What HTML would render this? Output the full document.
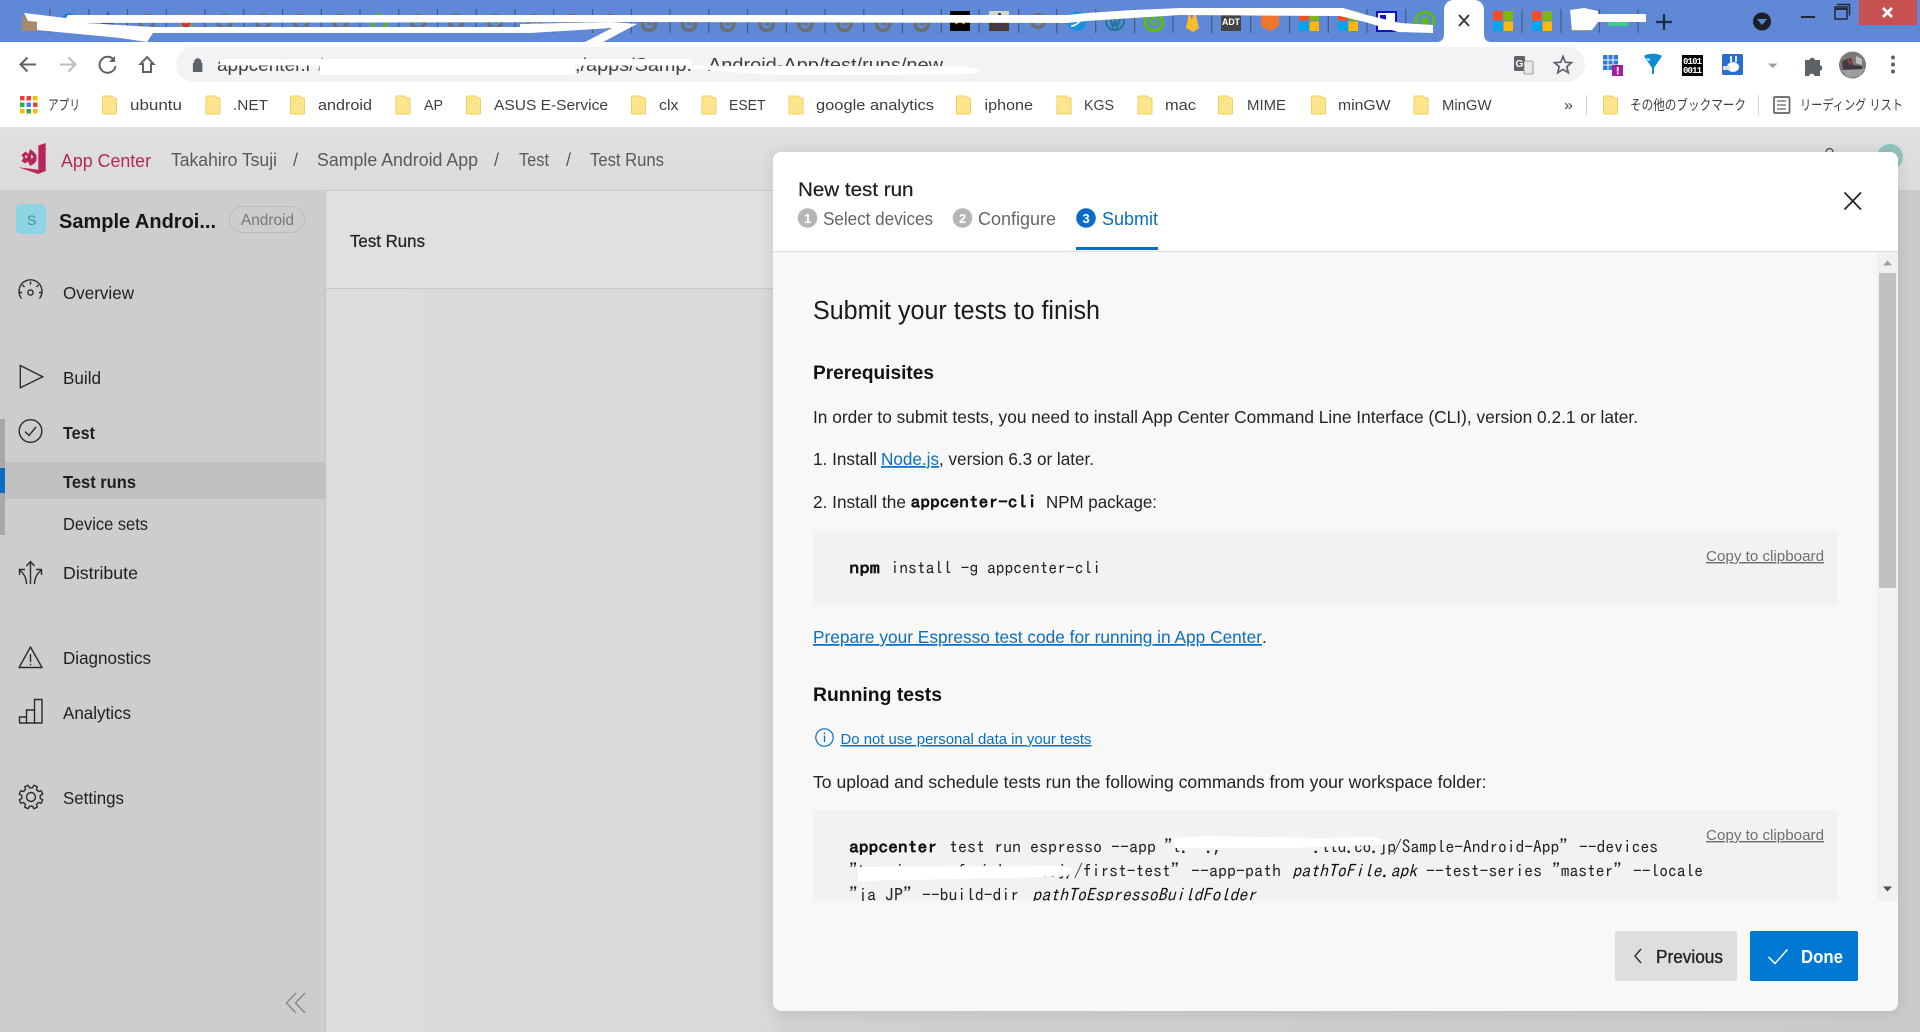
<!DOCTYPE html>
<html lang="en"><head><meta charset="utf-8"><title>App Center - New test run</title>
<style>
html,body{margin:0;padding:0;width:1920px;height:1032px;overflow:hidden;background:#dadada}
svg{position:absolute;left:0;top:0;display:block}
.box{position:absolute}
text{font-family:"Liberation Sans","Noto Sans CJK JP",sans-serif;font-size:17.5px;fill:#222;white-space:pre}
.bm{font-size:15px;fill:#3c4043}
.jp{font-size:14px;fill:#3c4043}
.nav{font-size:17.5px;fill:#1f1f1f}
.b{font-weight:bold}
.crumb{font-size:18px;fill:#5a5a5a}
.m{font-family:"IPAGothic","Liberation Mono",monospace;font-size:17.5px;fill:#222}
.mi{font-family:"IPAGothic","Liberation Mono",monospace;font-size:17.5px;font-style:italic;fill:#111}
.mb{font-family:"IPAGothic","Liberation Mono",monospace;font-size:17.5px;font-weight:bold;fill:#111}
.lnk{fill:#0a6fc2;text-decoration:underline}
.cp{font-size:14.5px;fill:#6f6f6f;text-decoration:underline}
.ic{fill:none;stroke:#2b2b2b;stroke-width:1.4}
</style></head>
<body>
<div class="box" style="left:0;top:0;width:1920px;height:42px;background:#5f88d6"></div>
<div class="box" style="left:0;top:42px;width:1920px;height:85px;background:#fff"></div>
<div class="box" style="left:176px;top:47px;width:1409px;height:35px;border-radius:18px;background:#f1f3f4"></div>
<div class="box" style="left:0;top:127px;width:1920px;height:63px;background:linear-gradient(#e0e0e0,#dbdbdb)"></div>
<div class="box" style="left:0;top:190px;width:1920px;height:1px;background:#c9c9c9"></div>
<div class="box" style="left:326px;top:191px;width:1594px;height:841px;background:linear-gradient(90deg,#dcdcdc 0,#d9d9d9 440px,#d0d0d0 460px,#cacaca 100%)"></div>
<div class="box" style="left:326px;top:191px;width:447px;height:97px;background:#e0e0e0;border-bottom:1px solid #c7c7c7"></div>
<div class="box" style="left:0;top:191px;width:326px;height:841px;background:#cdcdcd;border-right:1px solid #c4c4c4;box-sizing:border-box"></div>
<div class="box" style="left:0;top:419px;width:5px;height:116px;background:#a8a8a8"></div>
<div class="box" style="left:5px;top:462px;width:320px;height:37px;background:#c1c1c1"></div>
<div class="box" style="left:0;top:468px;width:5px;height:25px;background:#0a6cc4"></div>
<div class="box" style="left:1877px;top:144px;width:26px;height:26px;border-radius:50%;background:#92c4bc"></div>
<div class="box" style="left:773px;top:152px;width:1125px;height:859px;border-radius:8px;background:#f8f8f8;box-shadow:0 0 14px rgba(0,0,0,.1);overflow:hidden">
  <div class="box" style="left:0;top:0;width:1125px;height:99px;background:#fff;border-bottom:1.5px solid #dcdcdc"></div>
  <div class="box" style="left:1104px;top:100px;width:21px;height:649px;background:#f1f1f1"></div>
  <div class="box" style="left:1106px;top:121px;width:17px;height:315px;background:#c1c1c1"></div>
</div>
<div class="box" style="left:813px;top:531px;width:1024px;height:74px;background:#f2f2f2"></div>
<div class="box" style="left:813px;top:810px;width:1024px;height:91px;background:#f2f2f2"></div>
<div class="box" style="left:1076px;top:247px;width:82px;height:3px;background:#0a6cc4"></div>
<div class="box" style="left:1615px;top:931px;width:122px;height:50px;border-radius:2px;background:#dedede"></div>
<div class="box" style="left:1750px;top:931px;width:108px;height:50px;border-radius:2px;background:#0078d4"></div>

<svg width="1920" height="1032" viewBox="0 0 1920 1032" xmlns="http://www.w3.org/2000/svg">
<defs>
<symbol id="sw" overflow="visible"><circle cx="0" cy="0" r="6.5" fill="none" stroke="#6e6e6e" stroke-width="3.4"/><path d="M-2 0h5" stroke="#6e6e6e" stroke-width="2"/></symbol>
<symbol id="ms" overflow="visible"><rect x="-10" y="-10" width="9.5" height="9.5" fill="#f25022"/><rect x=".5" y="-10" width="9.5" height="9.5" fill="#7fba00"/><rect x="-10" y=".5" width="9.5" height="9.5" fill="#00a4ef"/><rect x=".5" y=".5" width="9.5" height="9.5" fill="#ffb900"/></symbol>
<symbol id="fd" overflow="visible"><path d="M1 0h8l2 2h2a1 1 0 0 1 1 1v14a1 1 0 0 1-1 1H1a1 1 0 0 1-1-1V1a1 1 0 0 1 1-1z" fill="#fde58e" stroke="#f1cf62" stroke-width="1"/></symbol>
<clipPath id="c2"><rect x="813" y="810" width="1024" height="91"/></clipPath>
</defs>

<!-- tab separators -->
<g stroke="#46597f" stroke-width="1.2">
<path d="M50 9v24M88.800 9v24M127.500 9v24M166.300 9v24M205 9v24M243.800 9v24M282.500 9v24M321.300 9v24M360 9v24M398.800 9v24M437.500 9v24M476.300 9v24M515 9v24M553.800 9v24M592.500 9v24M631.300 9v24M670 9v24M708.800 9v24M747.500 9v24M786.300 9v24M825 9v24M863.800 9v24M902.500 9v24M941.300 9v24M979 9v24M1018.700 9v24M1056.700 9v24M1095.700 9v24M1134.700 9v24M1173 9v24M1211.700 9v24M1250.700 9v24M1289.500 9v24M1328.300 9v24M1367 9v24M1405.800 9v24M1522 9v24M1561 9v24M1599.500 9v24M1638 9v24"/>
</g>
<!-- tab favicons -->
<rect x="22" y="17" width="16" height="14" fill="#a58a6c"/>
<circle cx="69" cy="21" r="8" fill="#1c7fd0"/>
<path d="M108 11l8 18h-16z" fill="#2d4fd0"/>
<use href="#sw" x="147" y="22"/><path d="M178 14h16v16h-16z" fill="#8a8a8a"/><path d="M180 15l6 14 6-14" fill="none" stroke="#d03030" stroke-width="3"/>
<use href="#sw" x="224.700" y="22"/><use href="#sw" x="263" y="22"/><use href="#sw" x="301" y="22"/><use href="#sw" x="340.500" y="22"/>
<circle cx="379" cy="22" r="7" fill="none" stroke="#5dbb12" stroke-width="3"/>
<use href="#sw" x="418" y="22"/><use href="#sw" x="456" y="22"/><use href="#sw" x="495" y="22"/><use href="#sw" x="534" y="22"/><use href="#sw" x="572.600" y="22"/><use href="#sw" x="610.500" y="22"/><use href="#sw" x="649" y="24"/><use href="#sw" x="689" y="24"/><use href="#sw" x="727.500" y="24"/><use href="#sw" x="766.700" y="24"/><use href="#sw" x="805.300" y="24"/><use href="#sw" x="844.500" y="24"/><use href="#sw" x="883" y="24"/><use href="#sw" x="921.600" y="24"/>
<rect x="950" y="11" width="20" height="20" rx="1" fill="#000"/><path d="M956 24l4-7 4 7" fill="none" stroke="#f0b400" stroke-width="2"/>
<rect x="989" y="11" width="20" height="20" fill="#d8d4c8"/><rect x="989" y="21" width="20" height="10" fill="#4a3a34"/><rect x="998" y="13" width="3" height="16" fill="#3d3a77"/>
<use href="#sw" x="1038" y="21"/>
<circle cx="1077" cy="21" r="10" fill="#1c8fdc"/><path d="M1071 26c4 0 10-4 12-10" stroke="#fff" stroke-width="1.6" fill="none"/>
<circle cx="1115" cy="21" r="9" fill="none" stroke="#21759b" stroke-width="2"/><path d="M1109 16l4 11 2-6 2 6 4-11" fill="none" stroke="#21759b" stroke-width="2.2"/>
<circle cx="1154" cy="22" r="8.500" fill="none" stroke="#5dbb12" stroke-width="3.4"/><circle cx="1154" cy="21" r="3.400" fill="none" stroke="#5dbb12" stroke-width="2"/>
<path d="M1186 28l3-15 3 6 3-8 4 17-6 4z" fill="#fbbc2c"/>
<rect x="1221" y="15" width="20" height="16" fill="#444"/><text x="1222" y="25" style="font-size:9.500px;fill:#fff;font-weight:bold" textLength="18" lengthAdjust="spacingAndGlyphs">ADT</text>
<path d="M1261 15l9-4 9 4v11l-9 5-9-5z" fill="#f0762a"/>
<use href="#ms" x="1309" y="21"/><use href="#ms" x="1348" y="21"/>
<rect x="1377" y="12" width="19" height="19" fill="#fff" stroke="#1010d0" stroke-width="2"/><path d="M1380 15h6v5h-6zM1388 24h5v5h-5z" fill="#1010d0"/>
<circle cx="1425" cy="21" r="9" fill="none" stroke="#5dbb12" stroke-width="3"/><circle cx="1425" cy="21" r="4" fill="#5dbb12"/>
<use href="#ms" x="1503" y="21"/><use href="#ms" x="1542" y="21"/>
<rect x="1571" y="13" width="19" height="18" fill="#999"/>
<rect x="1608" y="20" width="20" height="6" fill="#3ecf8e"/>

<!-- scribbles -->
<g fill="#fff">
<path d="M24 13L66 18L68 15L1067 15L1087 13L1133 10L1180 8L1343 8L1367 15L1400 23L1433 25L1433 33L1398 32L1365 22L1340 16L1180 15L1133 18L1087 21L1067 23L640 22L68 23L40 22L28 21Z"/>
<path d="M37 22L68 22L153 27L520 27L520 24L612 22L637 24L603 42L585 42L612 28L530 33L153 33L147 42L120 38L37 30Z"/>
<path d="M1570 10L1584 8L1598 11L1598 14L1646 14L1646 22L1598 22L1592 30L1572 30Z"/>
</g>

<!-- active tab -->
<path d="M1436 42c6 0 8-3 8-8V10c0-6 4-10 10-10h20c6 0 10 4 10 10v24c0 5 2 8 8 8z" fill="#fff"/>
<path d="M1459 15l10 11m0-11l-10 11" stroke="#333" stroke-width="1.800" fill="none"/>
<!-- new tab & window controls -->
<path d="M1664 14v16m-8-8h16" stroke="#222b3d" stroke-width="2.200"/>
<circle cx="1762" cy="21.500" r="9" fill="#1b2028"/><path d="M1757 19h10l-5 6z" fill="#5f88d6"/>
<path d="M1801 17h14" stroke="#20283a" stroke-width="2"/>
<rect x="1835" y="7" width="12" height="12" fill="none" stroke="#20283a" stroke-width="1.500"/><path d="M1837 4.500h12.500v11" fill="none" stroke="#20283a" stroke-width="1.500"/><path d="M1835 9h12" stroke="#20283a" stroke-width="2"/>
<rect x="1859" y="0" width="58" height="25" fill="#c75050"/>
<path d="M1883 8l9 9m0-9l-9 9" stroke="#fff" stroke-width="2.800"/>

<!-- toolbar -->
<g fill="none" stroke="#5f6368" stroke-width="2">
<path d="M36 64.500H21m6.500-7l-7 7 7 7"/>
<path d="M60 64.500h15m-6.500-7l7 7-7 7" stroke="#b9bcc0"/>
<path d="M114 60a8 8 0 1 0 1.500 6"/><path d="M115 56v6h-6" fill="#5f6368" stroke="none"/>
<path d="M147 57l-6.500 7h2.500v8h8v-8h2.500z"/>
</g>
<path d="M194 63v-1a3.700 3.700 0 0 1 7.400 0v1h1v9h-9.500v-9z" fill="#5f6368"/>
<text x="217" y="71" style="font-size:18px;fill:#3c4043" textLength="95" lengthAdjust="spacingAndGlyphs">appcenter.r</text>
<text x="318" y="71" style="font-size:18px;fill:#9a9a9a">/ ,   ,</text>
<text x="575" y="71" style="font-size:18px;fill:#3c4043" textLength="117" lengthAdjust="spacingAndGlyphs">,/apps/Samp.</text>
<text x="708" y="71" style="font-size:18px;fill:#3c4043" textLength="235" lengthAdjust="spacingAndGlyphs">Android-App/test/runs/new</text>
<g fill="#fff">
<path d="M220 59h472v6.500H220z"/>
<path d="M320 65h255v10H320z"/>
<path d="M686 65l40 1 60 0 150 0 30 .500 13 3v3l-12 1.500-70 1-120 0-60-4-30-3z"/>
</g>
<rect x="1514" y="56" width="11" height="15" rx="1.500" fill="#5f6368"/><text x="1515.500" y="67" style="font-size:10px;fill:#fff;font-weight:bold">G</text><rect x="1524" y="61" width="9" height="13" rx="1" fill="#e8e8e8" stroke="#888" stroke-width=".8"/>
<path d="M1563 56.500l2.300 5.700 6.200.500-4.700 4 1.500 6-5.300-3.300-5.300 3.300 1.500-6-4.700-4 6.200-.500z" fill="none" stroke="#5f6368" stroke-width="1.700"/>
<g>
<rect x="1603" y="55" width="15" height="15" fill="#2e7be0"/><path d="M1603 60h15M1603 65h15M1608 55v15M1613 55v15" stroke="#fff" stroke-width="1"/><rect x="1612" y="65" width="11" height="11" fill="#a0209c"/><rect x="1616.800" y="67" width="1.800" height="4.500" fill="#fff"/><rect x="1616.800" y="72.500" width="1.800" height="1.800" fill="#fff"/>
<path d="M1644 56c4-3 14-3 18 0l-8 12v6h-2v-6z" fill="#0f8bd6"/><path d="M1650 60l-3-1" stroke="#bfe9ff" stroke-width="2"/>
<rect x="1682" y="55" width="21" height="21" fill="#000"/>
<text x="1683" y="64" style="font-family:'Liberation Mono',monospace;font-size:9px;fill:#fff;font-weight:bold" textLength="19">0101</text>
<text x="1683" y="73" style="font-family:'Liberation Mono',monospace;font-size:9px;fill:#fff;font-weight:bold" textLength="19">0011</text>
<rect x="1722" y="54" width="21" height="21" rx="1.500" fill="#2a6fcf"/><ellipse cx="1733" cy="67" rx="6" ry="5" fill="#fff"/><path d="M1731 56v6M1736 56v6" stroke="#fff" stroke-width="1.700"/><rect x="1723" y="66" width="7" height="4" fill="#ddd"/>
</g>
<path d="M1768 63.500h9.500l-4.700 4.500z" fill="#9a9da1"/>
<path d="M1805 60h4.500a2.800 2.800 0 0 1 5.500 0h5v5.200a2.800 2.800 0 0 1 0 5.500V76h-5.500a2.800 2.800 0 0 0-5.500 0H1805z" fill="#5f6368"/>
<circle cx="1852.500" cy="65" r="13.500" fill="#7e7877"/><path d="M1842 61l9-3 2 7 9 1v8l-13 3-6-6z" fill="#3f3a44"/><path d="M1847 58l5 4-3 4z" fill="#a33b3b"/><path d="M1856 56l6 3v6l-6-2z" fill="#bfc0bd"/><path d="M1841 70l24-1-5 7-12 2z" fill="#9a9fa3"/>
<g fill="#5f6368"><circle cx="1893" cy="57.500" r="2"/><circle cx="1893" cy="64.500" r="2"/><circle cx="1893" cy="71.500" r="2"/></g>

<!-- bookmarks -->
<g>
<rect x="20" y="96" width="4.500" height="4.500" fill="#ea4335"/><rect x="26.500" y="96" width="4.500" height="4.500" fill="#ea4335"/><rect x="33" y="96" width="4.500" height="4.500" fill="#fbbc04"/>
<rect x="20" y="102.500" width="4.500" height="4.500" fill="#34a853"/><rect x="26.500" y="102.500" width="4.500" height="4.500" fill="#4285f4"/><rect x="33" y="102.500" width="4.500" height="4.500" fill="#ea4335"/>
<rect x="20" y="109" width="4.500" height="4.500" fill="#fbbc04"/><rect x="26.500" y="109" width="4.500" height="4.500" fill="#34a853"/><rect x="33" y="109" width="4.500" height="4.500" fill="#fbbc04"/>
<text class="jp" x="48" y="110" textLength="32" lengthAdjust="spacingAndGlyphs">アプリ</text>
<use href="#fd" x="102.500" y="96"/><text class="bm" x="130" y="110" textLength="52" lengthAdjust="spacingAndGlyphs">ubuntu</text>
<use href="#fd" x="206" y="96"/><text class="bm" x="233" y="110" textLength="35" lengthAdjust="spacingAndGlyphs">.NET</text>
<use href="#fd" x="290.500" y="96"/><text class="bm" x="318" y="110" textLength="54" lengthAdjust="spacingAndGlyphs">android</text>
<use href="#fd" x="396" y="96"/><text class="bm" x="424" y="110" textLength="19" lengthAdjust="spacingAndGlyphs">AP</text>
<use href="#fd" x="466.500" y="96"/><text class="bm" x="494" y="110" textLength="114" lengthAdjust="spacingAndGlyphs">ASUS E-Service</text>
<use href="#fd" x="631.500" y="96"/><text class="bm" x="659" y="110" textLength="19.500" lengthAdjust="spacingAndGlyphs">clx</text>
<use href="#fd" x="702" y="96"/><text class="bm" x="729" y="110" textLength="36.500" lengthAdjust="spacingAndGlyphs">ESET</text>
<use href="#fd" x="789" y="96"/><text class="bm" x="816" y="110" textLength="118" lengthAdjust="spacingAndGlyphs">google analytics</text>
<use href="#fd" x="956.500" y="96"/><text class="bm" x="984.500" y="110" textLength="48.500" lengthAdjust="spacingAndGlyphs">iphone</text>
<use href="#fd" x="1057" y="96"/><text class="bm" x="1084" y="110" textLength="30" lengthAdjust="spacingAndGlyphs">KGS</text>
<use href="#fd" x="1138" y="96"/><text class="bm" x="1165" y="110" textLength="31" lengthAdjust="spacingAndGlyphs">mac</text>
<use href="#fd" x="1218.500" y="96"/><text class="bm" x="1247" y="110" textLength="39" lengthAdjust="spacingAndGlyphs">MIME</text>
<use href="#fd" x="1311.500" y="96"/><text class="bm" x="1338" y="110" textLength="52.500" lengthAdjust="spacingAndGlyphs">minGW</text>
<use href="#fd" x="1414" y="96"/><text class="bm" x="1442" y="110" textLength="49.500" lengthAdjust="spacingAndGlyphs">MinGW</text>
<text class="bm" x="1564" y="110" textLength="9" lengthAdjust="spacingAndGlyphs">»</text>
<path d="M1586.500 95v20M1758.500 95v20" stroke="#d0d2d5" stroke-width="1"/>
<use href="#fd" x="1603.500" y="96"/><text class="jp" x="1630" y="110" textLength="116" lengthAdjust="spacingAndGlyphs">その他のブックマーク</text>
<rect x="1774" y="97" width="15.500" height="16" rx="1" fill="none" stroke="#5f6368" stroke-width="1.700"/><path d="M1777 101h9M1777 105h9M1777 109h9" stroke="#5f6368" stroke-width="1.300" fill="none"/>
<text class="jp" x="1800" y="110" textLength="103" lengthAdjust="spacingAndGlyphs">リーディング リスト</text>
</g>

<!-- app header -->
<path d="M38.300 145.500l7.400-2.500v28l-7.400 3-20-6.700 20 2.500z" fill="#b8255c"/>
<path d="M21.500 155l4-3.500 3 2.500 1.500-5 4.500 3.500 2 3v5l-2 3-4.500 2.500-2-4.500-3 2-3.500-2.500 2-3z" fill="#b8255c"/>
<path d="M25 155l3 1.500-2.500 2zM31 154.500l2.500 2-2 3z" fill="#e0e0e0"/>
<text x="61" y="167" style="font-size:18px;fill:#b32a58" textLength="90" lengthAdjust="spacingAndGlyphs">App Center</text>
<text class="crumb" x="171" y="166" textLength="106" lengthAdjust="spacingAndGlyphs">Takahiro Tsuji</text>
<text class="crumb" x="293" y="166">/</text>
<text class="crumb" x="317" y="166" textLength="161" lengthAdjust="spacingAndGlyphs">Sample Android App</text>
<text class="crumb" x="494" y="166">/</text>
<text class="crumb" x="519" y="166" textLength="30" lengthAdjust="spacingAndGlyphs">Test</text>
<text class="crumb" x="566" y="166">/</text>
<text class="crumb" x="590" y="166" textLength="74" lengthAdjust="spacingAndGlyphs">Test Runs</text>
<path d="M1826 152a3.500 3.500 0 0 1 7 0" fill="none" stroke="#444" stroke-width="1.200"/>

<!-- sidebar -->
<rect x="16" y="204" width="30" height="30" rx="5" fill="#8fd4e4"/>
<text x="27" y="225" style="font-size:14px;fill:#4a8c9c">S</text>
<text class="b" x="59" y="228" style="font-size:20px;fill:#161616" textLength="157" lengthAdjust="spacingAndGlyphs">Sample Androi...</text>
<rect x="229.500" y="206.500" width="75" height="26" rx="13" fill="none" stroke="#bcbcbc"/>
<text x="241" y="225" style="font-size:15.500px;fill:#777" textLength="53" lengthAdjust="spacingAndGlyphs">Android</text>
<text class="b" x="350" y="247" style="font-size:17.500px;font-weight:normal;stroke:#222;stroke-width:.25px" textLength="75" lengthAdjust="spacingAndGlyphs">Test Runs</text>

<text class="nav" x="63" y="299" textLength="71" lengthAdjust="spacingAndGlyphs">Overview</text>
<text class="nav" x="63" y="384" textLength="38" lengthAdjust="spacingAndGlyphs">Build</text>
<text class="nav b" x="63" y="439" textLength="32" lengthAdjust="spacingAndGlyphs">Test</text>
<text class="nav b" x="63" y="488" textLength="73" lengthAdjust="spacingAndGlyphs">Test runs</text>
<text class="nav" x="63" y="530" textLength="85" lengthAdjust="spacingAndGlyphs">Device sets</text>
<text class="nav" x="63" y="579" textLength="75" lengthAdjust="spacingAndGlyphs">Distribute</text>
<text class="nav" x="63" y="664" textLength="88" lengthAdjust="spacingAndGlyphs">Diagnostics</text>
<text class="nav" x="63" y="719" textLength="68" lengthAdjust="spacingAndGlyphs">Analytics</text>
<text class="nav" x="63" y="804" textLength="61" lengthAdjust="spacingAndGlyphs">Settings</text>

<g class="ic">
<!-- overview gauge -->
<path d="M21.500 298.500a11.500 11.500 0 1 1 18 0"/><circle cx="30.500" cy="292.500" r="2.600"/><path d="M30.500 281.500v3M22.500 285l2 2M38.500 285l-2 2M19 292.500h3M42 292.500h-3"/>
<!-- build -->
<path d="M20.300 365.500l22.400 11.300-22.400 11z"/>
<!-- test -->
<circle cx="30.500" cy="431" r="11.300"/><path d="M25 431.500l4 4 7-8.500"/>
<!-- distribute -->
<path d="M30.500 561.500V584M26.500 566l4-4.500 4 4.500"/><path d="M26.500 584c0-5-2-10-7-14M19.500 575v-5.500H25"/><path d="M34.500 584c0-5 2-10 7-14M41.500 575v-5.500H36"/>
<!-- diagnostics -->
<path d="M30.500 647l11.500 20.500H19z" stroke-linejoin="round"/><path d="M30.500 654v8M30.500 663.800v1.600"/>
<!-- analytics -->
<path d="M19.500 722.500v-5.500h7M26.500 722.500V710h8M34.500 722.500V699.500H42v23M19 723h23.500"/>
<!-- settings -->
<path transform="translate(31 797)" stroke-linejoin="round" d="M9.170 1.530L11.670 2.800L10.230 6.270L7.570 5.400L5.400 7.570L6.270 10.230L2.800 11.670L1.530 9.170L-1.530 9.170L-2.800 11.670L-6.270 10.230L-5.400 7.570L-7.570 5.400L-10.230 6.270L-11.670 2.800L-9.170 1.530L-9.170 -1.530L-11.670 -2.800L-10.230 -6.270L-7.570 -5.400L-5.400 -7.570L-6.270 -10.230L-2.800 -11.670L-1.530 -9.170L1.530 -9.170L2.800 -11.670L6.270 -10.230L5.400 -7.570L7.570 -5.400L10.230 -6.270L11.670 -2.800L9.170 -1.530Z"/>
<circle cx="31" cy="797" r="4.500"/>
</g>
<path d="M296 993l-9.500 10 9.500 10M305 993l-9.500 10 9.500 10" fill="none" stroke="#8a8a8a" stroke-width="1.500"/>

<!-- modal header -->
<text x="798" y="196" style="font-size:19px;fill:#1c1c1c;stroke:#1c1c1c;stroke-width:.2px" textLength="115.500" lengthAdjust="spacingAndGlyphs">New test run</text>
<circle cx="807.500" cy="218" r="9.800" fill="#b5b5b5"/><text x="804" y="223" style="font-size:13px;fill:#fff;font-weight:bold">1</text>
<text x="823" y="225" style="font-size:18px;fill:#666" textLength="110" lengthAdjust="spacingAndGlyphs">Select devices</text>
<circle cx="962.500" cy="218" r="9.800" fill="#b5b5b5"/><text x="959" y="223" style="font-size:13px;fill:#fff;font-weight:bold">2</text>
<text x="978" y="225" style="font-size:18px;fill:#666" textLength="78" lengthAdjust="spacingAndGlyphs">Configure</text>
<circle cx="1086" cy="218" r="9.800" fill="#0a6cc4"/><text x="1082.500" y="223" style="font-size:13px;fill:#fff;font-weight:bold">3</text>
<text x="1102" y="225" style="font-size:18px;fill:#0a6cc4" textLength="56" lengthAdjust="spacingAndGlyphs">Submit</text>
<path d="M1844.500 192.500l16.500 17m0-17l-16.500 17" fill="none" stroke="#222" stroke-width="1.700"/>

<!-- modal body -->
<text x="813" y="319" style="font-size:25.500px;fill:#1a1a1a" textLength="287" lengthAdjust="spacingAndGlyphs">Submit your tests to finish</text>
<text class="b" x="813" y="379" style="font-size:19.500px;fill:#111" textLength="121" lengthAdjust="spacingAndGlyphs">Prerequisites</text>
<text x="813" y="423" textLength="825" lengthAdjust="spacingAndGlyphs">In order to submit tests, you need to install App Center Command Line Interface (CLI), version 0.2.1 or later.</text>
<text x="813" y="465" textLength="64" lengthAdjust="spacingAndGlyphs">1. Install</text>
<text class="lnk" x="881" y="465" textLength="58" lengthAdjust="spacingAndGlyphs">Node.js</text>
<text x="939" y="465" textLength="155" lengthAdjust="spacingAndGlyphs">, version 6.3 or later.</text>
<text x="813" y="508" textLength="93" lengthAdjust="spacingAndGlyphs">2. Install the</text>
<text class="mb" x="910.500" y="508" textLength="126.500" lengthAdjust="spacingAndGlyphs">appcenter-cli</text>
<text x="1046" y="508" textLength="111" lengthAdjust="spacingAndGlyphs">NPM package:</text>

<text class="mb" x="849" y="574" textLength="31" lengthAdjust="spacingAndGlyphs">npm</text>
<text class="m" x="890.500" y="574" textLength="210.500" lengthAdjust="spacingAndGlyphs">install -g appcenter-cli</text>
<text class="cp" x="1706" y="561" textLength="118" lengthAdjust="spacingAndGlyphs">Copy to clipboard</text>

<text class="lnk" x="813" y="643" textLength="449" lengthAdjust="spacingAndGlyphs">Prepare your Espresso test code for running in App Center</text>
<text x="1262" y="643">.</text>
<text class="b" x="813" y="701" style="font-size:19.500px;fill:#111" textLength="129" lengthAdjust="spacingAndGlyphs">Running tests</text>
<circle cx="824.500" cy="737.500" r="8.700" fill="none" stroke="#0a6fc2" stroke-width="1.200"/>
<path d="M824.500 735.500v6.500M824.500 732.500v1.800" stroke="#0a6fc2" stroke-width="1.300"/>
<text class="lnk" x="840.500" y="744" style="font-size:15px" textLength="251" lengthAdjust="spacingAndGlyphs">Do not use personal data in your tests</text>
<text x="813" y="788" textLength="673.500" lengthAdjust="spacingAndGlyphs">To upload and schedule tests run the following commands from your workspace folder:</text>

<g clip-path="url(#c2)">
<text class="mb" x="849" y="853" textLength="88" lengthAdjust="spacingAndGlyphs">appcenter</text>
<text class="m" x="949" y="853" textLength="207" lengthAdjust="spacingAndGlyphs">test run espresso --app</text>
<text class="m" x="1164" y="853" textLength="232" lengthAdjust="spacing">"t.  .,        ~  .ltd.co.jp</text>
<text class="m" x="1393" y="853" textLength="175" lengthAdjust="spacingAndGlyphs">/Sample-Android-App"</text>
<text class="m" x="1579" y="853" textLength="79" lengthAdjust="spacingAndGlyphs">--devices</text>
<text class="m" x="849" y="877" textLength="225" lengthAdjust="spacing">"t  ..i.,  .  f  i.l.......j,</text>
<text class="m" x="1074" y="877" textLength="105.500" lengthAdjust="spacingAndGlyphs">/first-test"</text>
<text class="m" x="1191" y="877" textLength="90" lengthAdjust="spacingAndGlyphs">--app-path</text>
<text class="mi" x="1292" y="877" textLength="125" lengthAdjust="spacingAndGlyphs">pathToFile.apk</text>
<text class="m" x="1426" y="877" textLength="116" lengthAdjust="spacingAndGlyphs">--test-series</text>
<text class="m" x="1552" y="877" textLength="70" lengthAdjust="spacingAndGlyphs">"master"</text>
<text class="m" x="1633" y="877" textLength="70" lengthAdjust="spacingAndGlyphs">--locale</text>
<text class="m" x="849" y="901" textLength="63" lengthAdjust="spacingAndGlyphs">"ja_JP"</text>
<text class="m" x="922" y="901" textLength="97" lengthAdjust="spacingAndGlyphs">--build-dir</text>
<text class="mi" x="1032" y="901" textLength="224" lengthAdjust="spacingAndGlyphs">pathToEspressoBuildFolder</text>
</g>
<g fill="#fff">
<path d="M1174 838l30-2 120 2 50-1 14 4 4 3-40 2-60 2-118 0z"/>
<path d="M858 867l200-1 14 2-4 8-60 2-150 3z"/>
</g>
<text class="cp" x="1706" y="840" textLength="118" lengthAdjust="spacingAndGlyphs">Copy to clipboard</text>

<!-- scrollbar arrows -->
<path d="M1883 265.500h9l-4.500-5z" fill="#a0a0a0"/>
<path d="M1883 886.500h9l-4.500 5z" fill="#505050"/>

<!-- footer -->
<path d="M1641 949l-6 7 6 7" fill="none" stroke="#333" stroke-width="1.500"/>
<text class="b" x="1656" y="963" style="font-size:18px;font-weight:normal;fill:#222;stroke:#222;stroke-width:.35px" textLength="67" lengthAdjust="spacingAndGlyphs">Previous</text>
<path d="M1768.500 957l6.500 6.500 12.500-14" fill="none" stroke="#fff" stroke-width="1.500"/>
<text class="b" x="1801" y="963" style="font-size:18px;fill:#fff" textLength="42" lengthAdjust="spacingAndGlyphs">Done</text>
</svg>
</body></html>
